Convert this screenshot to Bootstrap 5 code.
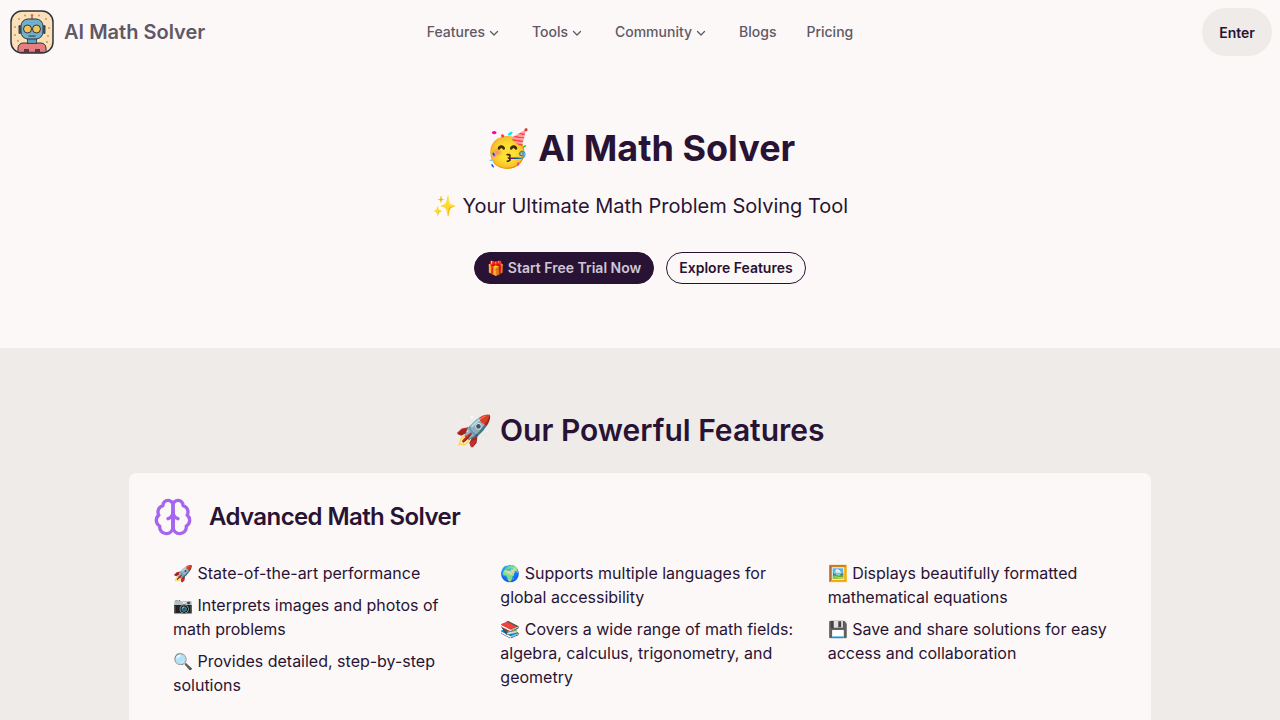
<!DOCTYPE html>
<html lang="en">
<head>
<meta charset="utf-8">
<title>AI Math Solver</title>
<link href="https://cdn.jsdelivr.net/npm/bootstrap@5.3.0/dist/css/bootstrap.min.css" rel="stylesheet">
<style>
html,body{overflow:hidden;height:720px}
body{font-family:Inter,"Noto Sans",sans-serif;background:#fbf8f7;color:#291334}
.topbar{height:64px;padding:8px}
.side{flex:1 1 0}
.brand-gap{gap:10px}
.logo-box{width:44px;height:44px;display:block;margin-left:2px}
.brand-name{font-size:20px;font-weight:600;color:#5f5866;line-height:28px}
.menu-link{font-size:14px;font-weight:500;color:#5f5866;text-decoration:none;line-height:20px}
.menu-gap{gap:30px}
.menu-link svg{margin-left:4px;margin-right:3px;vertical-align:-1px}
.enter-btn{width:70px;height:48px;border:0;border-radius:24px;background:#eeebe8;color:#291334;font-size:14px;font-weight:600}
.hero-area{height:284px;padding-top:64px}
.hero-title{font-size:36px;font-weight:700;line-height:40px;margin:0 0 24px}
.hero-sub{font-size:20px;line-height:28px;margin:0 0 32px}
.btn-gap{gap:12px}
.pill{height:32px;border-radius:16px;padding:0 12px;font-size:14px;font-weight:600;line-height:20px;display:inline-flex;align-items:center}
.pill-dark{background:#291334;color:#cfc7d6;border:1px solid #291334}
.pill-line{background:transparent;color:#291334;border:1px solid #291334}
.feat-area{background:#eeebe8;padding-top:64px;height:372px}
.feat-head{font-size:30px;font-weight:600;line-height:36px;margin:0 0 25px}
.feat-box{width:1022px;background:#fbf8f7;border-radius:8px;padding:24px 26px;height:400px}
.feat-name{font-size:24px;font-weight:600;line-height:32px;margin:0;letter-spacing:-.6px}
.feat-icon{width:40px;height:40px;margin-left:-2px;margin-right:16px;color:#a565ee}
.feat-cols{--bs-gutter-x:30px;margin-top:24px;padding-left:18px}
.feat-list{font-size:16px;line-height:24px;list-style:none;padding:0;margin:0}
.feat-list li{margin-bottom:8px}
</style>
</head>
<body>
<nav class="topbar d-flex align-items-center">
  <div class="side d-flex align-items-center brand-gap">
    <svg class="logo-box" viewBox="0 0 44 44" role="img" aria-label="AI Math Solver logo">
      <rect x="1" y="1" width="42" height="42" rx="11" fill="#fbe0b8" stroke="#33313a" stroke-width="1.500"/>
      <g fill="#b98f63"><circle cx="9" cy="9" r=".9"/><circle cx="15" cy="5.500" r=".9"/><circle cx="29" cy="5.500" r=".9"/><circle cx="36" cy="9" r=".9"/><circle cx="5" cy="17" r=".9"/><circle cx="5" cy="25" r=".9"/><circle cx="39" cy="18" r=".9"/><circle cx="38" cy="26" r=".9"/><circle cx="8" cy="31" r=".9"/><circle cx="37" cy="32" r=".9"/></g>
      <path d="M8 42.300V38a5 5 0 0 1 5-5h18a5 5 0 0 1 5 5v4.300z" fill="#e57f80" stroke="#33313a"/>
      <rect x="17.500" y="28" width="9" height="5.500" fill="#5f9fba" stroke="#33313a" stroke-width=".8"/>
      <rect x="11" y="9" width="22" height="20" rx="7" fill="#6fb0cc" stroke="#33313a"/>
      <circle cx="17.500" cy="19" r="4" fill="#f3c558" stroke="#33313a"/>
      <circle cx="26.500" cy="19" r="4" fill="#f3c558" stroke="#33313a"/>
      <rect x="8.500" y="15" width="2.500" height="9" rx="1.200" fill="#3c4654"/>
      <rect x="33" y="15" width="2.500" height="9" rx="1.200" fill="#3c4654"/>
      <path d="M22 9V6.500" stroke="#33313a"/><circle cx="22" cy="5.500" r="1.400" fill="#c9705f"/>
      <path d="M18.500 26h7" stroke="#33313a"/>
      <rect x="14" y="39" width="5" height="3" fill="#6b3049"/><rect x="25" y="39" width="5" height="3" fill="#6b3049"/>
    </svg>
    <span class="brand-name">AI Math Solver</span>
  </div>
  <div class="d-flex align-items-center menu-gap">
    <a class="menu-link" href="#">Features<svg width="10" height="10" viewBox="0 0 10 10" fill="none" stroke="currentColor" stroke-width="1.300" stroke-linecap="round" stroke-linejoin="round"><path d="M1.500 3.500 5 7l3.500-3.500"/></svg></a>
    <a class="menu-link" href="#">Tools<svg width="10" height="10" viewBox="0 0 10 10" fill="none" stroke="currentColor" stroke-width="1.300" stroke-linecap="round" stroke-linejoin="round"><path d="M1.500 3.500 5 7l3.500-3.500"/></svg></a>
    <a class="menu-link" href="#">Community<svg width="10" height="10" viewBox="0 0 10 10" fill="none" stroke="currentColor" stroke-width="1.300" stroke-linecap="round" stroke-linejoin="round"><path d="M1.500 3.500 5 7l3.500-3.500"/></svg></a>
    <a class="menu-link" href="#">Blogs</a>
    <a class="menu-link" href="#">Pricing</a>
  </div>
  <div class="side d-flex justify-content-end">
    <button class="enter-btn" type="button">Enter</button>
  </div>
</nav>
<section class="hero-area text-center">
  <h1 class="hero-title">🥳 AI Math Solver</h1>
  <p class="hero-sub">✨ Your Ultimate Math Problem Solving Tool</p>
  <div class="d-flex justify-content-center btn-gap">
    <a class="pill pill-dark text-decoration-none" href="#">🎁 Start Free Trial Now</a>
    <a class="pill pill-line text-decoration-none" href="#">Explore Features</a>
  </div>
</section>
<section class="feat-area">
  <h2 class="feat-head text-center">🚀 Our Powerful Features</h2>
  <div class="feat-box mx-auto">
    <div class="d-flex align-items-center">
      <svg class="feat-icon" viewBox="0 0 24 24" fill="none" stroke="currentColor" stroke-width="2" stroke-linecap="round" stroke-linejoin="round" aria-hidden="true">
        <path d="M12 5a3 3 0 1 0-5.997.125 4 4 0 0 0-2.526 5.77 4 4 0 0 0 .556 6.588A4 4 0 1 0 12 18Z"/>
        <path d="M12 5a3 3 0 1 1 5.997.125 4 4 0 0 1 2.526 5.77 4 4 0 0 1-.556 6.588A4 4 0 1 1 12 18Z"/>
        <path d="M15 13a4.500 4.500 0 0 1-3-4 4.500 4.500 0 0 1-3 4"/>
        <path d="M12 18V9"/>
      </svg>
      <h3 class="feat-name">Advanced Math Solver</h3>
    </div>
    <div class="row feat-cols">
      <div class="col-4"><ul class="feat-list">
        <li>🚀 State-of-the-art performance</li>
        <li>📷 Interprets images and photos of math problems</li>
        <li>🔍 Provides detailed, step-by-step solutions</li>
      </ul></div>
      <div class="col-4"><ul class="feat-list">
        <li>🌍 Supports multiple languages for global accessibility</li>
        <li>📚 Covers a wide range of math fields: algebra, calculus, trigonometry, and geometry</li>
      </ul></div>
      <div class="col-4"><ul class="feat-list">
        <li>🖼️ Displays beautifully formatted mathematical equations</li>
        <li>💾 Save and share solutions for easy access and collaboration</li>
      </ul></div>
    </div>
  </div>
</section>
<script src="https://cdn.jsdelivr.net/npm/bootstrap@5.3.0/dist/js/bootstrap.bundle.min.js"></script>
</body>
</html>
